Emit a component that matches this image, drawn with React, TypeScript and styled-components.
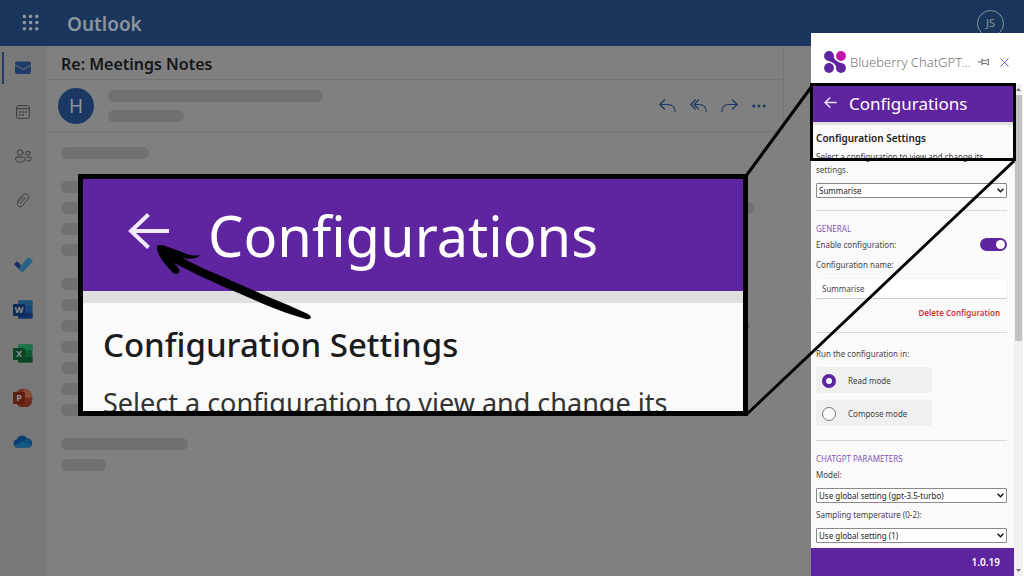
import React, { useState } from "react";
import styled, { createGlobalStyle, css } from "styled-components";

const GlobalStyle = createGlobalStyle`
  * { box-sizing: border-box; }
  body { margin: 0; background: #808080; font-family: "Noto Sans", "Liberation Sans", sans-serif; }
  button, input, select { font-family: inherit; }
  button { padding: 0; border: 0; background: none; cursor: pointer; }
  svg { display: block; }
  h1, h2, h3, p { margin: 0; }
`;

const Shell = styled.div`
  display: flex;
  flex-direction: column;
  min-height: 100vh;
  background: #808080;
`;

const TopBar = styled.header`
  display: flex;
  align-items: center;
  height: 46px;
  padding: 0 20px 0 22px;
  background: #1a365d;
  color: #8c949e;
`;

const Brand = styled.h1`
  flex: 1;
  margin-left: 27px;
  font-size: 19px;
  line-height: 28px;
  font-weight: 600;
  padding-top: 2px;
`;

const UserBadge = styled.button`
  width: 27px;
  height: 27px;
  border: 1px solid #8c949e;
  border-radius: 50%;
  color: #8c949e;
  font-size: 11px;
  line-height: 24px;
`;

const Body = styled.div`
  display: flex;
  flex: 1;
`;

const Rail = styled.nav`
  display: flex;
  flex-direction: column;
  width: 47px;
  background: #797979;
`;

const RailGroup = styled.div<{ $apps?: boolean }>`
  display: flex;
  flex-direction: column;
  margin-top: ${(p) => (p.$apps ? 21 : 0)}px;
`;

const RailButton = styled.button<{ $active?: boolean }>`
  display: flex;
  align-items: center;
  justify-content: center;
  height: 32px;
  margin: 6px 0;
  border-left: 2px solid ${(p) => (p.$active ? "#1d3c69" : "transparent")};
  margin-left: 2px;
  padding-right: 5px;
`;

const Mail = styled.main`
  flex: 1;
  min-width: 0;
  margin-right: 240px;
`;

const Subject = styled.div`
  height: 34px;
  padding: 4px 14px;
  border: 1px solid #747474;
  border-top: 0;
  border-left: 0;
  border-radius: 2px;
  color: #151515;
`;

const SubjectText = styled.h2`
  font-size: 16px;
  line-height: 28px;
  font-weight: 600;
`;

const Sender = styled.div`
  display: flex;
  align-items: center;
  height: 52px;
  padding: 0 17px 0 11px;
  border: 1px solid #767676;
  border-left: 0;
  border-top: 0;
`;

const Avatar = styled.div`
  width: 36px;
  height: 36px;
  border-radius: 50%;
  background: #1a3863;
  color: #8c949e;
  font-size: 19px;
  line-height: 36px;
  text-align: center;
`;

const SenderLines = styled.div`
  display: grid;
  gap: 8px;
  flex: 1;
  margin-left: 14px;
`;

const Bar = styled.div<{ $w?: number }>`
  width: ${(p) => (p.$w ? `${p.$w}px` : "auto")};
  height: 12px;
  border-radius: 6px;
  background: #717171;
`;

const Actions = styled.div`
  display: flex;
  gap: 14px;
`;

const Letter = styled.div`
  display: grid;
  gap: 22px;
  padding: 15px 30px 20px 14px;
`;

const Para = styled.div`
  display: grid;
  gap: 9px;
`;

/* Add-in task pane, docked over the mail window */

const Pane = styled.aside`
  position: fixed;
  top: 33px;
  right: 0;
  bottom: 0;
  display: flex;
  flex-direction: column;
  width: 213px;
  background: #fff;
  color: #444;
`;

const PaneHead = styled.div`
  display: flex;
  align-items: center;
  height: 51px;
  padding: 7px 15px 0 13px;
`;

const PaneTitle = styled.h2`
  flex: 1;
  margin-left: 4px;
  color: #777;
  font-size: 13px;
  line-height: 18px;
  font-weight: 300;
  white-space: nowrap;
`;

const IconButton = styled.button<{ $gap?: number }>`
  margin-left: ${(p) => p.$gap ?? 0}px;
`;

const PaneMain = styled.div`
  display: flex;
  flex: 1;
  min-height: 0;
`;

const PaneColumn = styled.div`
  display: flex;
  flex: 1;
  flex-direction: column;
  min-width: 0;
`;

const ConfigBar = styled.div<{ $large?: boolean }>`
  display: flex;
  align-items: center;
  flex: none;
  background: #5f249f;
  color: #fff;
  ${(p) =>
    p.$large
      ? css`
          height: 124px;
          padding-left: 45px;
          border-bottom: 12px solid #dfdfdf;
        `
      : css`
          height: 41px;
          padding-left: 13px;
          border-bottom: 3px solid #dfdfdf;
        `}
`;

const ConfigTitle = styled.h2<{ $large?: boolean }>`
  font-weight: 400;
  white-space: nowrap;
  ${(p) =>
    p.$large
      ? css`
          margin-left: 38px;
          font-size: 56px;
          line-height: 76px;
        `
      : css`
          margin-left: 12px;
          padding-top: 2px;
          font-size: 17px;
          line-height: 24px;
        `}
`;

const Form = styled.form`
  flex: 1;
  min-height: 0;
  overflow: hidden;
  padding: 6px 7px 0 5px;
  background: #fafafa;
  font-size: 8px;
  line-height: 14px;
`;

const FormTitle = styled.h3`
  color: #222;
  font-size: 10px;
  line-height: 14px;
  font-weight: 600;
`;

const Intro = styled.p`
  margin: 5px 0 7px;
  line-height: 13px;
`;

const Rule = styled.hr<{ $top: number; $bottom: number }>`
  height: 1px;
  margin: ${(p) => p.$top}px 0 ${(p) => p.$bottom}px;
  border: 0;
  background: #d8d8d8;
`;

const Section = styled.h3`
  margin-bottom: 2px;
  color: #8553b5;
  font-size: 8px;
  line-height: 14px;
  font-weight: 400;
`;

const Label = styled.label<{ $gap?: number }>`
  display: block;
  margin-bottom: ${(p) => p.$gap ?? 6}px;
`;

const SelectBox = styled.div`
  position: relative;
  height: 15px;
  margin-bottom: 5px;
  svg {
    position: absolute;
    right: 3px;
    top: 5px;
    pointer-events: none;
  }
`;

const Select = styled.select`
  display: block;
  appearance: none;
  width: 100%;
  height: 15px;
  padding: 0 14px 0 2px;
  border: 1px solid #8a8a8a;
  border-radius: 1px;
  background: #fff;
  color: #222;
  font-size: 8px;
  line-height: 13px;
`;

const SwitchRow = styled.div`
  display: flex;
  align-items: flex-start;
  justify-content: space-between;
  height: 14px;
  margin-bottom: 6px;
`;

const Switch = styled.input`
  appearance: none;
  width: 27px;
  height: 13px;
  margin: 0;
  border-radius: 7px;
  background: #aaa;
  &::before {
    content: "";
    display: block;
    width: 9px;
    height: 9px;
    margin: 2px;
    border-radius: 50%;
    background: #fff;
  }
  &:checked { background: #5f249f; }
  &:checked::before { margin-left: 16px; }
`;

const TextInput = styled.input`
  display: block;
  width: 100%;
  height: 20px;
  padding: 0 6px;
  border: 0;
  border-bottom: 1px solid #d0d0d0;
  border-radius: 2px;
  background: #fff;
  box-shadow: 0 0 1px #ccc;
  color: #444;
  font-size: 8px;
`;

const DeleteButton = styled.button`
  display: block;
  margin: 7px 7px 0 auto;
  color: #d13438;
  font-size: 8px;
  line-height: 14px;
  font-weight: 600;
`;

const Modes = styled.fieldset`
  display: grid;
  gap: 7px;
  width: 116px;
  margin: 0;
  padding: 0;
  border: 0;
`;

const Legend = styled.legend`
  padding: 0 0 6px;
  white-space: nowrap;
`;

const Mode = styled.label`
  display: flex;
  align-items: center;
  gap: 12px;
  height: 26px;
  padding: 1px 0 0 6px;
  border-radius: 3px;
  background: #f0f0f0;
`;

const Radio = styled.input`
  appearance: none;
  width: 14px;
  height: 14px;
  margin: 0;
  border: 1px solid #777;
  border-radius: 50%;
  background: #fafafa;
  &:checked { border: 4px solid #5f249f; background: #fff; }
`;

const Footer = styled.footer`
  height: 28px;
  padding-right: 14px;
  background: #5f249f;
  color: #fff;
  font-size: 10px;
  line-height: 28px;
  font-weight: 600;
  text-align: right;
`;

const Scrollbar = styled.div`
  display: flex;
  flex-direction: column;
  align-items: center;
  width: 10px;
  background: #f1f1f1;
  border-right: 1px solid #fff;
`;

const ScrollArrow = styled.div<{ $down?: boolean }>`
  display: flex;
  align-items: center;
  height: 11px;
  margin-top: ${(p) => (p.$down ? "auto" : 0)};
  transform: ${(p) => (p.$down ? "rotate(180deg)" : "none")};
`;

const Thumb = styled.div`
  width: 7px;
  height: 50%;
  background: #c1c1c1;
`;

/* Annotation: marked area, its enlarged copy and the lines that join them */

const Marker = styled.div`
  position: absolute;
  top: 50px;
  left: -1px;
  right: 8px;
  height: 78px;
  border: 3px solid #000;
`;

const Callout = styled.figure`
  position: fixed;
  top: 174px;
  left: 78px;
  right: 276px;
  height: 242px;
  margin: 0;
  overflow: hidden;
  border: 5px solid #000;
  background: #fafafa;
`;

const CalloutTitle = styled.h3`
  margin: 20px 0 0 20px;
  color: #1c1c1c;
  font-size: 33px;
  line-height: 44px;
  font-weight: 500;
  white-space: nowrap;
`;

const CalloutText = styled.p`
  margin: 18px 0 0 20px;
  color: #333;
  font-size: 27px;
  line-height: 36px;
  white-space: nowrap;
`;

const BackSlot = styled.span<{ $large?: boolean }>`
  padding-bottom: ${(p) => (p.$large ? 8 : 2)}px;
`;

const Pointer = styled.svg`
  position: absolute;
  left: 72px;
  top: 60px;
`;

const Connectors = styled.svg`
  position: fixed;
  right: 0;
  top: 0;
  pointer-events: none;
`;

const line = { fill: "none", stroke: "#3c3c3c", strokeWidth: 1, strokeLinecap: "round", strokeLinejoin: "round" } as const;
const blueLine = { ...line, stroke: "#1a3863", strokeWidth: 1.2 } as const;

const Waffle = () => (
  <svg width="18" height="18" viewBox="0 0 18 18" fill="#8c949e" aria-hidden="true">
    {[2.4, 8.6, 14.8].map((y) => [2.4, 8.6, 14.8].map((x) => <circle key={`${x}-${y}`} cx={x} cy={y} r="1.8" />))}
  </svg>
);

const MailIcon = () => (
  <svg width="16" height="14" viewBox="0 0 16 14" aria-hidden="true">
    <path d="M0 3.4V2.6A2 2 0 0 1 2 .5h12a2 2 0 0 1 2 2.1v.8L8 8z" fill="#1d3c69" />
    <path d="M0 4.5 8 9l8-4.500V11a2 2 0 0 1-2 2H2a2 2 0 0 1-2-2z" fill="#1d3c69" />
  </svg>
);

const CalendarIcon = () => (
  <svg width="14" height="14" viewBox="0 0 14 14" aria-hidden="true">
    <rect x=".6" y=".6" width="12.800" height="12.800" rx="2" {...line} />
    <path d="M.6 3.600h12.800" {...line} />
    {[[4, 7], [7, 7], [10, 7], [4, 10], [7, 10]].map(([x, y]) => (
      <circle key={`${x}-${y}`} cx={x} cy={y} r=".9" fill="#3c3c3c" />
    ))}
  </svg>
);

const PeopleIcon = () => (
  <svg width="17" height="14" viewBox="0 0 17 14" aria-hidden="true">
    <circle cx="5.200" cy="3.500" r="2.800" {...line} />
    <circle cx="12.700" cy="4.300" r="2.100" {...line} />
    <path d="M1.700 8.200h7a1.200 1.200 0 0 1 1.200 1.200c0 2.500-1.900 3.900-4.700 3.900S.5 11.900.5 9.400a1.200 1.200 0 0 1 1.200-1.200z" {...line} />
    <path d="M12 8.200h3.300c.7 0 1.200.5 1.200 1.100 0 1.900-1.900 3-4.700 2.700" {...line} />
  </svg>
);

const ClipIcon = () => (
  <svg width="14" height="15" viewBox="0 0 14 15" aria-hidden="true">
    <path d="M1.200 8.200 6.800 2c3-3.200 8 .5 5.300 4L6.300 12.600c-2.600 3-6.600-.6-4.300-3.400L7.600 3.600M4.200 10.700l5.600-6.400" {...line} />
  </svg>
);

const TodoIcon = () => (
  <svg width="19" height="16" viewBox="0 0 19 16" aria-hidden="true">
    <path d="m0 7.200 3-3 5.400 5.400-3 3z" fill="#112f60" />
    <path d="m4.400 11.700 3 3.300a1 1 0 0 0 1.500 0L19 4.200 15.200.8a1 1 0 0 0-1.400 0z" fill="#27618a" />
  </svg>
);

const officeColors = {
  W: ["#1d5279", "#15437a", "#102f64", "#0e2a59"],
  X: ["#1b7448", "#115a32", "#0d4527", "#0a4524"],
};

const OfficeIcon = ({ letter }: { letter: "W" | "X" }) => {
  const [a, b, c, d] = officeColors[letter];
  return (
    <svg width="20" height="19" viewBox="0 0 20 19" aria-hidden="true">
      <rect x="5" y=".5" width="14.500" height="18" rx="1" fill={b} />
      <path d="M5 6V1.500a1 1 0 0 1 1-1h12.500a1 1 0 0 1 1 1V6z" fill={a} />
      <path d="M5 13h14.500v4.500a1 1 0 0 1-1 1H6a1 1 0 0 1-1-1z" fill={c} />
      <rect x="0" y="4" width="12" height="12" rx="1" fill={d} />
      <text x="6" y="13.400" textAnchor="middle" fontSize="9" fontWeight="700" fill="#909090">{letter}</text>
    </svg>
  );
};

const PowerPointIcon = () => (
  <svg width="20" height="19" viewBox="0 0 20 19" aria-hidden="true">
    <circle cx="10.500" cy="9.500" r="9" fill="#74301e" />
    <path d="M10.500.5a9 9 0 0 1 9 9h-9z" fill="#8a4c3a" />
    <path d="M2.500 13.500h17a9 9 0 0 1-17 0z" fill="#692716" />
    <rect x="0" y="4" width="12" height="12" rx="1" fill="#621f10" />
    <text x="6" y="13.400" textAnchor="middle" fontSize="9" fontWeight="700" fill="#909090">P</text>
  </svg>
);

const CloudIcon = () => (
  <svg width="20" height="13" viewBox="0 0 20 13" aria-hidden="true">
    <path d="M4 12.500a4 4 0 0 1-.3-7.900A6 6 0 0 1 14.500 3.500a4.500 4.500 0 0 1 .5 9z" fill="#0b3f70" />
    <path d="M9 6.200 14.500 3.900a4.500 4.500 0 0 1 .8 8.600L8 10z" fill="#10507e" />
    <path d="M1 10.500 9.500 6.800l9 4.200c-.7 1-1.800 1.500-3 1.500H4c-1.200 0-2.300-.8-3-2z" fill="#145a84" />
  </svg>
);

const ReplyIcon = ({ all, flip }: { all?: boolean; flip?: boolean }) => (
  <svg width="17" height="14" viewBox="0 0 17 14" aria-hidden="true">
    <g transform={flip ? "translate(17 0) scale(-1 1)" : undefined}>
      <path d={all ? "M8.500 1 4 5.500 8.500 10M4 5.500h5.500c4 0 6.500 3 6.700 7M5.200 1 .8 5.500 5.200 10" : "M5.500 1 .8 5.500 5.500 10M.8 5.500h8c4.500 0 7.200 3 7.400 7"} {...blueLine} />
    </g>
  </svg>
);

const DotsIcon = () => (
  <svg width="14" height="14" viewBox="0 0 14 14" fill="#1a3863" aria-hidden="true">
    <circle cx="1.800" cy="7" r="1.500" />
    <circle cx="7" cy="7" r="1.500" />
    <circle cx="12.200" cy="7" r="1.500" />
  </svg>
);

const Logo = () => (
  <svg width="22" height="22" viewBox="0 0 22 22" aria-hidden="true">
    <path d="M9.300 3c.2 4.500 1.500 7 8.700 9.300L12.700 19c-.2-4.500-1.500-7-8.700-9.300z" fill="#5f249f" />
    <circle cx="5" cy="5" r="4.900" fill="#5f249f" />
    <circle cx="5" cy="17" r="4.900" fill="#5f249f" />
    <circle cx="17" cy="17" r="4.900" fill="#5f249f" />
    <circle cx="17" cy="5" r="4.900" fill="#c316a5" />
  </svg>
);

const PinIcon = () => (
  <svg width="11" height="8" viewBox="0 0 11 8" aria-hidden="true">
    <path d="M0 4h4M4 .8v6.400M4 2l2 .6h2L10.300 1v6L8 5.400H6L4 6" fill="none" stroke="#666" />
  </svg>
);

const CloseIcon = () => (
  <svg width="9" height="9" viewBox="0 0 9 9" aria-hidden="true">
    <path d="m.5.5 8 8m0-8-8 8" stroke="#5c5ef5" strokeWidth="1" />
  </svg>
);

const BackIcon = ({ large }: { large?: boolean }) => (
  <svg width={large ? 42 : 13} height={large ? 36 : 11} viewBox="0 0 42 36" aria-hidden="true">
    <path d="M20.500 1.500 3 18l17.500 16.500M3 18h38" fill="none" stroke="#f1e8fa" strokeWidth={large ? 4 : 4.5} />
  </svg>
);

const Chevron = () => (
  <svg width="7" height="5" viewBox="0 0 7 5" aria-hidden="true">
    <path d="M.6.8 3.500 3.700 6.400.8" fill="none" stroke="#111" strokeWidth="1.500" />
  </svg>
);

const Triangle = () => (
  <svg width="5" height="3" viewBox="0 0 5 3" aria-hidden="true">
    <path d="M2.500 0 5 3H0z" fill="#777" />
  </svg>
);

const Dropdown = ({ id, label, options }: { id: string; label?: string; options: string[] }) => (
  <SelectBox>
    <Select id={id} aria-label={label}>
      {options.map((o) => <option key={o}>{o}</option>)}
    </Select>
    <Chevron />
  </SelectBox>
);

export default function App() {
  const [enabled, setEnabled] = useState(true);
  const [mode, setMode] = useState("Read mode");
  const [name, setName] = useState("Summarise");

  return (
    <Shell>
      <GlobalStyle />
      <TopBar>
        <button aria-label="App launcher"><Waffle /></button>
        <Brand>Outlook</Brand>
        <UserBadge>JS</UserBadge>
      </TopBar>

      <Body>
        <Rail>
          <RailGroup>
            <RailButton $active aria-label="Mail"><MailIcon /></RailButton>
            <RailButton aria-label="Calendar"><CalendarIcon /></RailButton>
            <RailButton aria-label="People"><PeopleIcon /></RailButton>
            <RailButton aria-label="Files"><ClipIcon /></RailButton>
          </RailGroup>
          <RailGroup $apps>
            <RailButton aria-label="To Do"><TodoIcon /></RailButton>
            <RailButton aria-label="Word"><OfficeIcon letter="W" /></RailButton>
            <RailButton aria-label="Excel"><OfficeIcon letter="X" /></RailButton>
            <RailButton aria-label="PowerPoint"><PowerPointIcon /></RailButton>
            <RailButton aria-label="OneDrive"><CloudIcon /></RailButton>
          </RailGroup>
        </Rail>

        <Mail>
          <Subject><SubjectText>Re: Meetings Notes</SubjectText></Subject>
          <Sender>
            <Avatar>H</Avatar>
            <SenderLines><Bar $w={215} /><Bar $w={76} /></SenderLines>
            <Actions>
              <button aria-label="Reply"><ReplyIcon /></button>
              <button aria-label="Reply all"><ReplyIcon all /></button>
              <button aria-label="Forward"><ReplyIcon flip /></button>
              <button aria-label="More"><DotsIcon /></button>
            </Actions>
          </Sender>
          <Letter>
            <Bar $w={88} />
            <Para><Bar $w={600} /><Bar /><Bar $w={640} /><Bar $w={420} /></Para>
            <Para>
              <Bar $w={640} /><Bar $w={660} /><Bar $w={689} /><Bar $w={650} /><Bar $w={660} /><Bar $w={640} /><Bar $w={400} />
            </Para>
            <Para><Bar $w={127} /><Bar $w={45} /></Para>
          </Letter>
        </Mail>
      </Body>

      <Pane>
        <PaneHead>
          <Logo />
          <PaneTitle>Blueberry ChatGPT...</PaneTitle>
          <IconButton aria-label="Pin"><PinIcon /></IconButton>
          <IconButton $gap={11} aria-label="Close"><CloseIcon /></IconButton>
        </PaneHead>
        <PaneMain>
          <PaneColumn>
            <ConfigBar>
              <button aria-label="Back"><BackSlot as="div"><BackIcon /></BackSlot></button>
              <ConfigTitle>Configurations</ConfigTitle>
            </ConfigBar>
            <Form onSubmit={(e) => e.preventDefault()}>
              <FormTitle>Configuration Settings</FormTitle>
              <Intro>Select a configuration to view and change its settings.</Intro>
              <Dropdown id="configuration" label="Configuration" options={["Summarise"]} />
              <Rule $top={12} $bottom={11} />
              <Section>GENERAL</Section>
              <SwitchRow>
                <label htmlFor="enable">Enable configuration:</label>
                <Switch id="enable" type="checkbox" checked={enabled} onChange={() => setEnabled(!enabled)} />
              </SwitchRow>
              <Label htmlFor="name" $gap={7}>Configuration name:</Label>
              <TextInput id="name" value={name} onChange={(e) => setName(e.target.value)} />
              <DeleteButton type="button">Delete Configuration</DeleteButton>
              <Rule $top={12} $bottom={14} />
              <Modes>
                <Legend>Run the configuration in:</Legend>
                {["Read mode", "Compose mode"].map((m) => (
                  <Mode key={m}>
                    <Radio type="radio" name="mode" checked={mode === m} onChange={() => setMode(m)} />
                    {m}
                  </Mode>
                ))}
              </Modes>
              <Rule $top={14} $bottom={11} />
              <Section>CHATGPT PARAMETERS</Section>
              <Label htmlFor="model">Model:</Label>
              <Dropdown id="model" options={["Use global setting (gpt-3.5-turbo)"]} />
              <Label htmlFor="temperature">Sampling temperature (0-2):</Label>
              <Dropdown id="temperature" options={["Use global setting (1)"]} />
            </Form>
            <Footer>1.0.19</Footer>
          </PaneColumn>
          <Scrollbar>
            <ScrollArrow><Triangle /></ScrollArrow>
            <Thumb />
            <ScrollArrow $down><Triangle /></ScrollArrow>
          </Scrollbar>
        </PaneMain>
        <Marker />
      </Pane>

      <Callout>
        <ConfigBar $large>
          <BackSlot $large><BackIcon large /></BackSlot>
          <ConfigTitle $large>Configurations</ConfigTitle>
        </ConfigBar>
        <CalloutTitle>Configuration Settings</CalloutTitle>
        <CalloutText>Select a configuration to view and change its</CalloutText>
        <Pointer width="160" height="90" viewBox="155 239 160 90" aria-hidden="true">
          <path d="M157 249C156 245 160 244 165 246L182 252C190 256 195 256 201 255C196 259 189 260 181 257C198 267 215 273 232 281C256 292 282 302 308 314C313 317 311 320 306 319C277 311 250 298 222 286C206 279 190 271 174 263L179 269C181 273 176 276 172 272C165 264 159 258 157 249z" />
        </Pointer>
      </Callout>

      <Connectors width="280" height="420" viewBox="744 0 280 420" aria-hidden="true">
        <path d="M746 176 812 86M747 414 1014 161" stroke="#000" strokeWidth="3" />
      </Connectors>
    </Shell>
  );
}
